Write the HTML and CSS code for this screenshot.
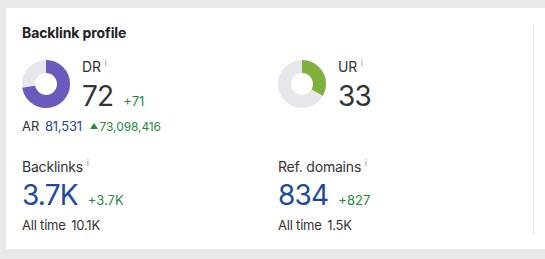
FILE: index.html
```html
<!DOCTYPE html>
<html lang="en">
<head>
  <meta charset="UTF-8" />
  <meta name="viewport" content="width=device-width, initial-scale=1.0"/>
  <title>Backlink profile</title>
  <link rel="stylesheet" href="styles.css">
</head>
<body>

  <section class="card">
    <div class="profile">
      <h2>Backlink profile</h2>

      <div class="metrics">
        <!-- Domain rating -->
        <div class="rating">
          <div class="rating-top">
            <svg class="donut" viewBox="0 0 48 48" width="48" height="48">
              <circle cx="24" cy="24" r="17.5" fill="none" stroke="#e6e7ea" stroke-width="13"/>
              <circle cx="24" cy="24" r="17.5" fill="none" stroke="#6b59bb" stroke-width="13"
                      stroke-dasharray="79.17 109.96" transform="rotate(-90 24 24)"/>
            </svg>
            <div>
              <div class="label">DR <sup class="info">i</sup></div>
              <div class="big">72<span class="delta">+71</span></div>
            </div>
          </div>
          <div class="ar">AR <span class="blue">81,531</span> <span class="delta"><span class="tri"></span>73,098,416</span></div>
        </div>

        <!-- URL rating -->
        <div class="rating">
          <div class="rating-top">
            <svg class="donut" viewBox="0 0 48 48" width="48" height="48">
              <circle cx="24" cy="24" r="17.5" fill="none" stroke="#e6e7ea" stroke-width="13"/>
              <circle cx="24" cy="24" r="17.5" fill="none" stroke="#80b13b" stroke-width="13"
                      stroke-dasharray="36.29 109.96" transform="rotate(-90 24 24)"/>
            </svg>
            <div>
              <div class="label">UR <sup class="info">i</sup></div>
              <div class="big">33</div>
            </div>
          </div>
        </div>

        <div class="stat">
          <div class="label">Backlinks <sup class="info">i</sup></div>
          <div class="big blue">3.7K<span class="delta">+3.7K</span></div>
          <div class="total">All time <span class="num">10.1K</span></div>
        </div>

        <div class="stat">
          <div class="label">Ref. domains <sup class="info">i</sup></div>
          <div class="big blue">834<span class="delta">+827</span></div>
          <div class="total">All time <span class="num">1.5K</span></div>
        </div>
      </div>
    </div>
    <div class="divider"></div>
  </section>

</body>
</html>
```

FILE: styles.css
```css
body {
  margin: 0;
  background-color: #e8e9eb;
  font-family: Inter, "Noto Sans", sans-serif;
  color: #333;
}

.card {
  display: flex;
  margin: 8px 0 0 6px;
  height: 241px;
  background-color: #fff;
  border-radius: 2px 0 0 2px;
}

.profile {
  flex: 0 0 495px;
  padding: 15px 16px 0 16px;
}

.divider {
  width: 1px;
  margin: 16px 0 15px;
  background-color: #e4e5e7;
}

h2 {
  margin: 0;
  font-size: 14px;
  line-height: 20px;
  font-weight: 700;
  color: #222;
  letter-spacing: -0.1px;
}

.metrics {
  display: grid;
  grid-template-columns: 256px 1fr;
  margin-top: 17px;
}

.rating-top {
  display: flex;
  gap: 12px;
}

.donut {
  display: block;
}

.label {
  font-size: 14px;
  line-height: 16px;
  margin-top: -1px;
  letter-spacing: -0.2px;
}

.info {
  font-size: 9px;
  color: #999;
  vertical-align: 6px;
  line-height: 0;
}

.big {
  font-size: 28px;
  line-height: 32px;
  margin-top: 5px;
  letter-spacing: -0.8px;
}

.delta {
  font-size: 13px;
  color: #278a3f;
  margin-left: 10px;
  letter-spacing: 0;
}

.blue {
  color: #1c4b9c;
}

.ar {
  margin-top: 0;
  font-size: 13px;
  line-height: 18px;
}

.ar .blue {
  margin-left: 2px;
  letter-spacing: -0.2px;
}

.ar .delta {
  margin-left: 4px;
  font-size: 12px;
  letter-spacing: -0.1px;
}

.tri {
  display: inline-block;
  width: 0;
  height: 0;
  margin-right: 2px;
  border-left: 4px solid transparent;
  border-right: 4px solid transparent;
  border-bottom: 6px solid #278a3f;
  vertical-align: 2px;
}

.stat {
  margin-top: 24px;
}

.stat .big {
  margin-top: 4px;
}

.total {
  margin-top: 0;
  font-size: 13px;
  line-height: 18px;
  letter-spacing: -0.2px;
}

.total .num {
  margin-left: 2px;
}
```
